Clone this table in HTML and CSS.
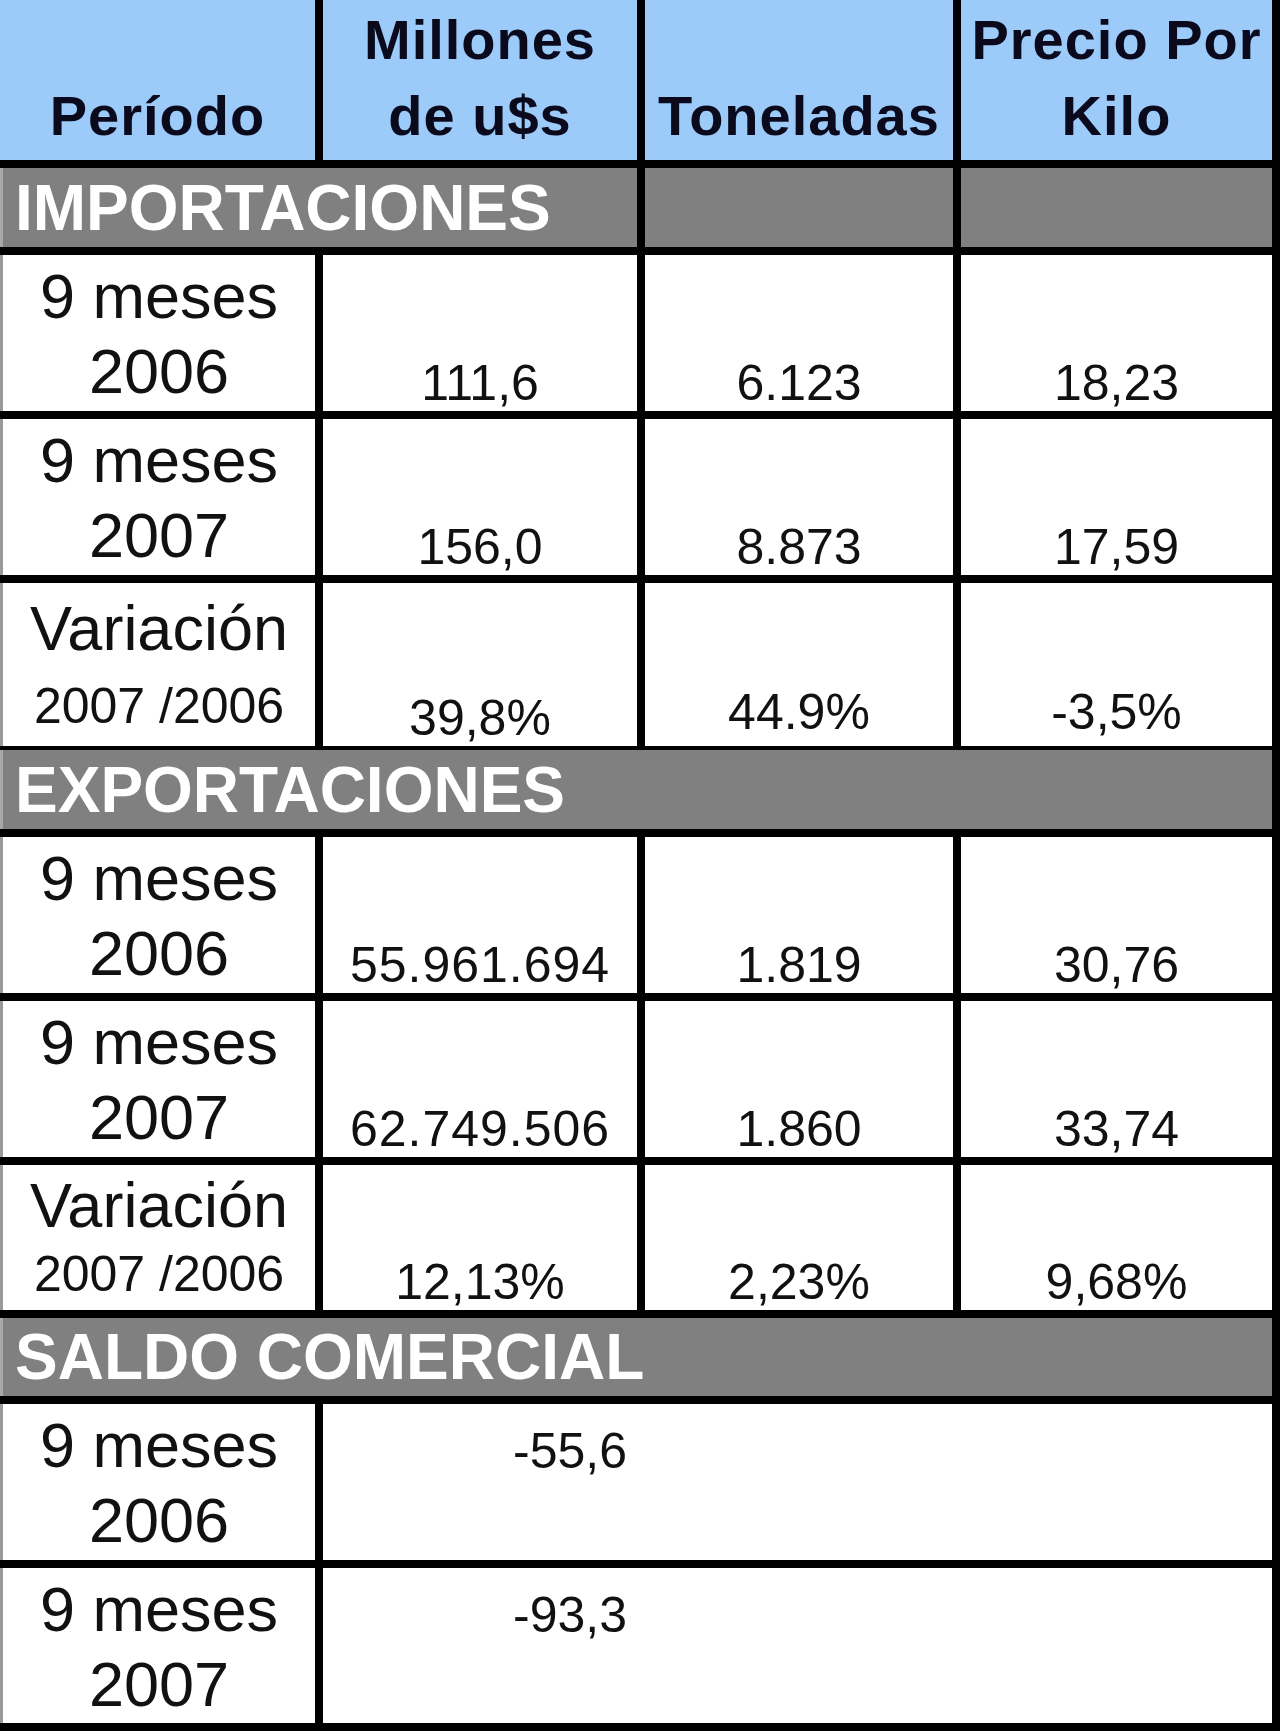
FILE: index.html
```html
<!DOCTYPE html>
<html lang="es">
<head>
<meta charset="utf-8">
<title>Importaciones y exportaciones</title>
<link rel="stylesheet" href="styles.css">
</head>
<body>
<div class="sheet">
  <div class="row row-head">
    <div class="hcell hcell-first"><span>Período</span></div>
    <div class="hcell"><span>Millones</span><span>de u$s</span></div>
    <div class="hcell"><span>Toneladas</span></div>
    <div class="hcell"><span>Precio Por</span><span>Kilo</span></div>
  </div>

  <div class="row row-band">
    <div class="band band-span2">IMPORTACIONES</div>
    <div class="band"></div>
    <div class="band"></div>
  </div>
  <div class="row row-data">
    <div class="period"><span>9 meses</span><span>2006</span></div>
    <div class="num">111,6</div>
    <div class="num">6.123</div>
    <div class="num">18,23</div>
  </div>
  <div class="row row-data">
    <div class="period"><span>9 meses</span><span>2007</span></div>
    <div class="num">156,0</div>
    <div class="num">8.873</div>
    <div class="num">17,59</div>
  </div>
  <div class="row row-data row-var">
    <div class="period period-var"><span>Variación</span><span class="sub">2007 /2006</span></div>
    <div class="num num-low">39,8%</div>
    <div class="num num-lift">44.9%</div>
    <div class="num num-lift">-3,5%</div>
  </div>

  <div class="row row-band">
    <div class="band band-full">EXPORTACIONES</div>
  </div>
  <div class="row row-data">
    <div class="period"><span>9 meses</span><span>2006</span></div>
    <div class="num num-wide">55.961.694</div>
    <div class="num">1.819</div>
    <div class="num">30,76</div>
  </div>
  <div class="row row-data">
    <div class="period"><span>9 meses</span><span>2007</span></div>
    <div class="num num-wide">62.749.506</div>
    <div class="num">1.860</div>
    <div class="num">33,74</div>
  </div>
  <div class="row row-data row-var-compact">
    <div class="period period-var period-var-compact"><span>Variación</span><span class="sub">2007 /2006</span></div>
    <div class="num">12,13%</div>
    <div class="num">2,23%</div>
    <div class="num">9,68%</div>
  </div>

  <div class="row row-band row-band-short">
    <div class="band band-full">SALDO COMERCIAL</div>
  </div>
  <div class="row row-data">
    <div class="period"><span>9 meses</span><span>2006</span></div>
    <div class="saldo"><span class="saldo-value">-55,6</span></div>
  </div>
  <div class="row row-data row-last">
    <div class="period"><span>9 meses</span><span>2007</span></div>
    <div class="saldo"><span class="saldo-value">-93,3</span></div>
  </div>
</div>
</body>
</html>
```

FILE: styles.css
```css
* {
  box-sizing: border-box;
}

html, body {
  margin: 0;
  padding: 0;
  background: #ffffff;
}

.sheet {
  width: 1280px;
  height: 1731px;
  background: #000000;
  display: flex;
  flex-direction: column;
  gap: 8px;
  padding-bottom: 8px;
  font-family: "Liberation Sans", Arial, sans-serif;
  color: #111111;
  overflow: hidden;
}

.row {
  display: grid;
  grid-template-columns: 315px 314px 308px 311px;
  column-gap: 8px;
  padding-right: 8px;
  flex: none;
}

/* Header */
.row-head {
  height: 160px;
}

.hcell {
  background: #9ccbf9;
  display: flex;
  flex-direction: column;
  justify-content: flex-end;
  align-items: center;
  padding-bottom: 6px;
  font-weight: bold;
  font-size: 56px;
  letter-spacing: 1px;
  line-height: 76px;
  color: #0a0a1c;
  white-space: nowrap;
}

/* Section bands */
.row-band {
  height: 79px;
}

.row-band-short {
  height: 78px;
}

.band {
  background: #808080;
  color: #ffffff;
  font-weight: bold;
  font-size: 64px;
  line-height: 64px;
  display: flex;
  align-items: center;
  padding-left: 12px;
  white-space: nowrap;
}

.band-span2 {
  grid-column: 1 / 3;
  border-left: 3px solid #a8a8a8;
}

.band-full {
  grid-column: 1 / -1;
  border-left: 3px solid #a8a8a8;
}

/* Data rows */
.row-data {
  height: 156px;
}

.row-var {
  height: 159px;
}

.row-var-compact {
  height: 145px;
}

.row-last {
  height: 155px;
}

.period {
  background: #ffffff;
  border-left: 3px solid #9a9a9a;
  display: flex;
  flex-direction: column;
  align-items: center;
  padding-top: 4px;
  font-size: 63px;
  line-height: 75px;
  white-space: nowrap;
}

.period-var {
  padding-top: 8px;
}

.period-var .sub {
  font-size: 50px;
  line-height: 80px;
}

.period-var-compact {
  padding-top: 3px;
}

.period-var-compact .sub {
  line-height: 62px;
}

.num {
  background: #ffffff;
  display: flex;
  align-items: flex-end;
  justify-content: center;
  font-size: 50px;
  line-height: 56px;
  white-space: nowrap;
}

.num-wide {
  letter-spacing: 1px;
}

.num-lift {
  padding-bottom: 6px;
}

.num-low {
  padding-bottom: 0;
}

/* Saldo comercial rows: value sits right-aligned in the second column, rest is open */
.saldo {
  grid-column: 2 / -1;
  background: #ffffff;
  display: grid;
  grid-template-columns: 314px 1fr;
  align-items: start;
}

.saldo-value {
  text-align: right;
  padding-right: 10px;
  padding-top: 10px;
  font-size: 50px;
  line-height: 75px;
  white-space: nowrap;
}
```
